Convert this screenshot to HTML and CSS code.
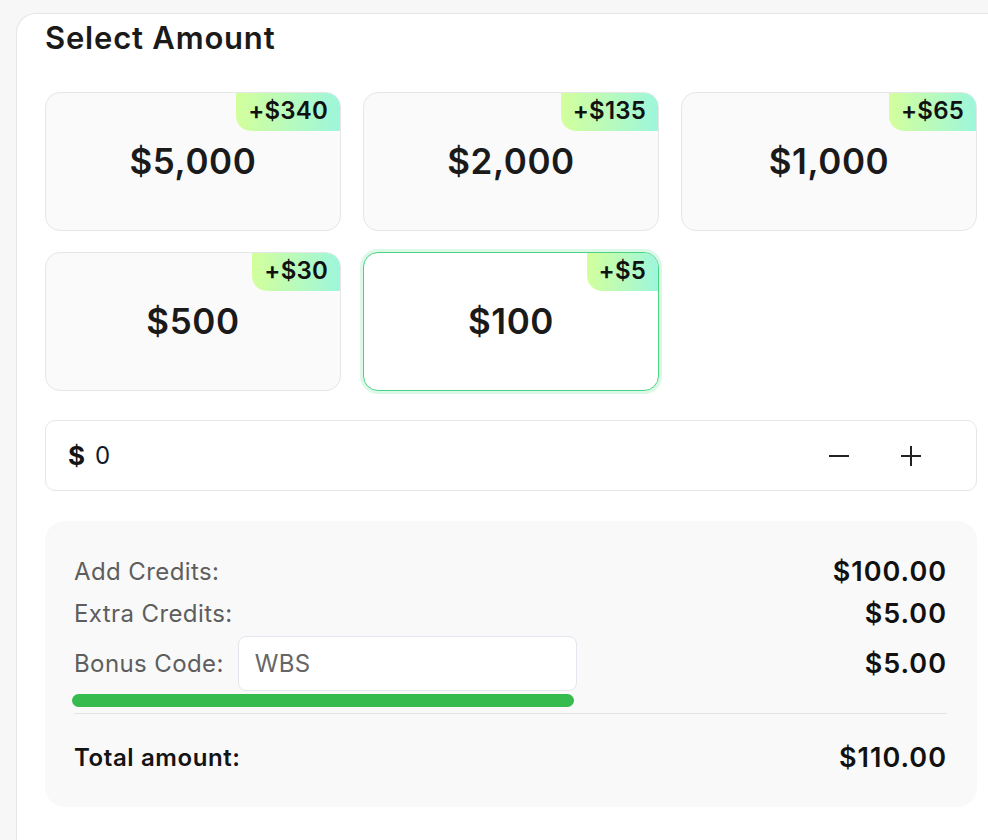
FILE: index.html
```html
<!DOCTYPE html>
<html>
<head>
<meta charset="utf-8">
<link rel="stylesheet" href="styles.css">
</head>
<body>
<div class="panel">
  <h2 class="title">Select Amount</h2>
  <div class="grid">
    <div class="opt"><span class="badge">+$340</span><span class="amt">$5,000</span></div>
    <div class="opt"><span class="badge">+$135</span><span class="amt">$2,000</span></div>
    <div class="opt"><span class="badge">+$65</span><span class="amt">$1,000</span></div>
    <div class="opt"><span class="badge">+$30</span><span class="amt">$500</span></div>
    <div class="opt selected"><span class="badge">+$5</span><span class="amt">$100</span></div>
  </div>
  <div class="custom">
    <span class="cur">$</span>
    <span class="val">0</span>
    <span class="step">
      <svg width="20" height="20" viewBox="0 0 20 20"><path d="M0 10H20" stroke="#222" stroke-width="2"/></svg>
    </span>
    <span class="step">
      <svg width="20" height="20" viewBox="0 0 20 20"><path d="M0 10H20M10 0V20" stroke="#222" stroke-width="2"/></svg>
    </span>
  </div>
  <div class="summary">
    <div class="row"><span class="lbl">Add Credits:</span><span class="num">$100.00</span></div>
    <div class="row"><span class="lbl">Extra Credits:</span><span class="num">$5.00</span></div>
    <div class="row bonus">
      <span class="lbl">Bonus Code:</span>
      <span class="code">WBS</span>
      <span class="num">$5.00</span>
    </div>
    <div class="bar"></div>
    <div class="divider"></div>
    <div class="row total"><span class="lbl">Total amount:</span><span class="num">$110.00</span></div>
  </div>
</div>
</body>
</html>
```

FILE: styles.css
```css
html, body {
  margin: 0;
  padding: 0;
  background: #f7f7f7;
  overflow: hidden;
  height: 840px;
}
body {
  font-family: Inter, "Noto Sans", sans-serif;
  color: #141414;
}
.panel {
  box-sizing: border-box;
  margin: 13px 0 0 16px;
  background: #fff;
  border: 1px solid #e6e6e6;
  border-right: none;
  border-bottom: none;
  border-radius: 20px 0 0 0;
  padding: 0 11px 0 28px;
  height: 827px;
}
.title {
  margin: 0;
  font-size: 31px;
  font-weight: 600;
  letter-spacing: 0.8px;
  line-height: 48px;
  color: #1a1a1a;
  height: 78px;
}
.grid {
  display: grid;
  grid-template-columns: repeat(3, 1fr);
  column-gap: 22px;
  row-gap: 21px;
}
.opt {
  position: relative;
  height: 137px;
  border: 1px solid #e6e6e6;
  border-radius: 15px;
  background: #fafafa;
  display: flex;
  align-items: center;
  justify-content: center;
  overflow: hidden;
}
.opt.selected {
  background: #fff;
  border-color: #4cd384;
  box-shadow: 0 0 0 3px #dcf8e6;
}
.amt {
  font-size: 35px;
  font-weight: 600;
  letter-spacing: 0.6px;
  color: #1a1a1a;
  padding-bottom: 2px;
}
.badge {
  position: absolute;
  top: 0;
  right: 0;
  height: 38px;
  line-height: 36px;
  padding: 0 12px;
  font-size: 24px;
  font-weight: 600;
  letter-spacing: 0.2px;
  color: #111;
  background: linear-gradient(90deg, #d3ff9c, #9df6dc);
  border-bottom-left-radius: 15px;
}
.custom {
  margin-top: 29px;
  height: 69px;
  border: 1px solid #e6e6e6;
  border-radius: 10px;
  background: #fff;
  display: flex;
  align-items: center;
  padding: 0 55px 0 22px;
}
.cur {
  font-size: 26px;
  font-weight: 700;
  color: #141414;
}
.val {
  margin-left: 10px;
  font-size: 24px;
  color: #111827;
  flex: 1;
}
.step {
  display: flex;
  width: 20px;
  height: 20px;
}
.step + .step {
  margin-left: 52px;
}
.summary {
  margin-top: 30px;
  background: #f9f9f9;
  border-radius: 20px;
  padding: 30px 30px 0 29px;
  height: 256px;
}
.row {
  display: flex;
  align-items: center;
  justify-content: space-between;
  height: 40px;
}
.row + .row {
  margin-top: 2px;
}
.lbl {
  font-size: 24px;
  letter-spacing: 0.4px;
  color: #5e5e5e;
}
.num {
  font-size: 27px;
  font-weight: 600;
  letter-spacing: 1px;
  color: #111;
  margin-left: auto;
}
.row.bonus {
  height: 55px;
  margin-top: 3px;
}
.code {
  margin-left: 14px;
  width: 339px;
  height: 55px;
  box-sizing: border-box;
  border: 1px solid #e3e6ec;
  border-radius: 8px;
  background: #fff;
  font-size: 24px;
  letter-spacing: 0.3px;
  color: #666;
  padding-left: 16px;
  display: flex;
  align-items: center;
}
.bar {
  margin: 3px 0 0 -2px;
  width: 502px;
  height: 13px;
  border-radius: 7px;
  background: #35bb4e;
}
.divider {
  margin-top: 6px;
  height: 1px;
  background: #e4e4e4;
}
.row.total {
  margin-top: 23px;
}
.total .lbl {
  font-weight: 600;
  letter-spacing: 0.6px;
  color: #141414;
}
```
